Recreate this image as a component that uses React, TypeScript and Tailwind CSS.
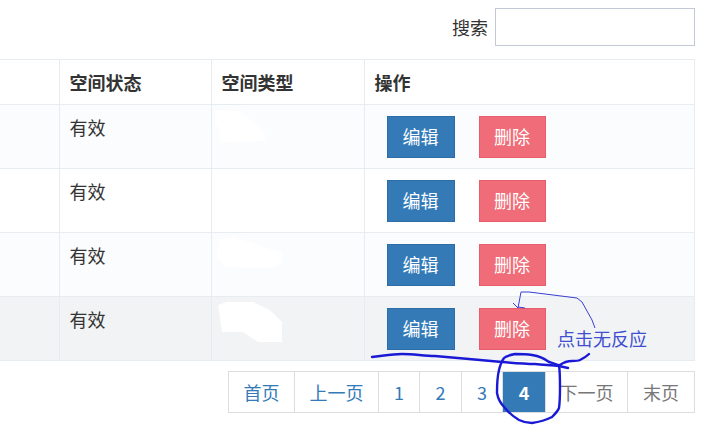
const rows = [
  { bg: "bg-[#fbfcfe]" },
  { bg: "bg-white" },
  { bg: "bg-[#fbfcfe]" },
  { bg: "bg-[#f2f3f5]" },
];

const pages = [
  { label: "首页", w: "w-[67px]", cls: "text-[#337ab7]" },
  { label: "上一页", w: "w-[85px]", cls: "text-[#337ab7]" },
  { label: "1", w: "w-[42px]", cls: "text-[#337ab7]" },
  { label: "2", w: "w-[43px]", cls: "text-[#337ab7]" },
  { label: "3", w: "w-[42px]", cls: "text-[#337ab7]" },
  { label: "4", w: "w-[44px]", cls: "bg-[#337ab7] border-[#337ab7] text-white font-semibold" },
  { label: "下一页", w: "w-[83px]", cls: "text-[#777777]" },
  { label: "末页", w: "w-[68px]", cls: "text-[#777777]" },
];

const cell = "border border-[#e7ecf1] text-left";

function Scribbles() {
  return (
    <svg className="absolute left-0 top-0 pointer-events-none" width="712" height="431" viewBox="0 0 712 431" fill="none">
      {/* white-out blobs over the 空间类型 cells */}
      <path d="M215 110 L240 111 L265 133 L265 141 L221 142 L219 128 L215 124 Z" fill="#ffffff" />
      <path d="M218 240 L233 237 L282 253 L282 262 L273 268 L227 267 L217 258 Z" fill="#ffffff" />
      <path d="M218 305 L227 302 L253 302 L270 310 L282 322 L282 342 L258 342 L243 332 L222 332 Z" fill="#ffffff" />
      {/* pen strokes */}
      <path
        d="M372 357 C382 356 392 354 402 354 C414 354 424 356 435 356 C447 357 458 358 469 359 C480 360 491 361 502 362 C513 363 524 364 535 364 C544 365 552 365 559 366 L568 368"
        stroke="#1a1ad6" strokeWidth="2.4" strokeLinecap="round"
      />
      <path d="M560 365 C564 362 568 361 572 361 C576 361 578 361 580 360 C584 358 587 356 589 354" stroke="#1a1ad6" strokeWidth="2.4" strokeLinecap="round" />
      <path
        d="M560 366 C556 364 552 363 549 362 C544 358 538 356 532 355 C526 354 520 354 515 354 C510 355 506 356 504 358 C501 362 500 366 499 370 C497 378 497 386 497 393 C498 399 501 404 505 408 C509 413 514 417 519 420 C523 422 528 423 532 423 C539 422 546 420 552 417 C555 414 558 411 559 408 C560 401 560 394 560 387 C560 380 560 372 559 365"
        stroke="#1a1ad6" strokeWidth="2.4" strokeLinecap="round"
      />
      <path
        d="M595 328 L592 320 L582 302 L577 298 L529 292 L521 292 L518 308 M513 303 L518 308 M518 307 L525 308"
        stroke="#3a3fd0" strokeWidth="1"
      />
    </svg>
  );
}

export default function App() {
  return (
    <div className="relative w-[712px] h-[431px] overflow-hidden bg-white text-[18px] text-[#333333] font-['Noto_Sans_CJK_SC','Noto_Sans',sans-serif]">
      {/* search */}
      <div className="flex justify-end items-center gap-[7px] pt-[8px] pr-[17px] mb-[13px]">
        <label className="leading-[36px]">搜索</label>
        <input className="w-[200px] h-[38px] bg-white border border-[#c2cad8] outline-none" />
      </div>

      {/* table */}
      <table className="w-[695px] table-fixed border-collapse">
        <thead>
          <tr className="h-[45px]">
            <th className="w-[59px] border-y border-r border-[#e7ecf1]"></th>
            <th className={`${cell} w-[152px] pl-[10px] font-bold align-middle`}>空间状态</th>
            <th className={`${cell} w-[153px] pl-[10px] font-bold align-middle`}>空间类型</th>
            <th className={`${cell} pl-[10px] font-bold align-middle`}>操作</th>
          </tr>
        </thead>
        <tbody>
          {rows.map((row, i) => (
            <tr key={i} className={`h-[64px] ${row.bg}`}>
              <td className="border-y border-r border-[#e7ecf1]"></td>
              <td className={`${cell} align-top pl-[10px] pt-[9px] leading-[27px]`}>有效</td>
              <td className={cell}></td>
              <td className={`${cell} align-top pl-[22px] pt-[11px]`}>
                <div className="flex gap-[24px]">
                  <button className="w-[68px] h-[42px] pb-[2px] bg-[#337ab7] border border-[#2e6da4] text-white">编辑</button>
                  <button className="w-[67px] h-[42px] pb-[2px] bg-[#ef6c78] border border-[#e85d6b] text-white">删除</button>
                </div>
              </td>
            </tr>
          ))}
        </tbody>
      </table>

      {/* pagination */}
      <div className="flex justify-end pr-[17px] mt-[10px]">
        {pages.map((p, i) => (
          <a
            key={p.label}
            className={`flex items-center justify-center h-[42px] border border-[#dddddd] ${i > 0 ? "-ml-px" : ""} ${p.w} ${p.cls}`}
          >
            {p.label}
          </a>
        ))}
      </div>

      <Scribbles />

      {/* handwritten note on the screenshot */}
      <span className="absolute left-[557px] top-[326px] text-[#3f4fd0] leading-[24px]">点击无反应</span>
    </div>
  );
}
